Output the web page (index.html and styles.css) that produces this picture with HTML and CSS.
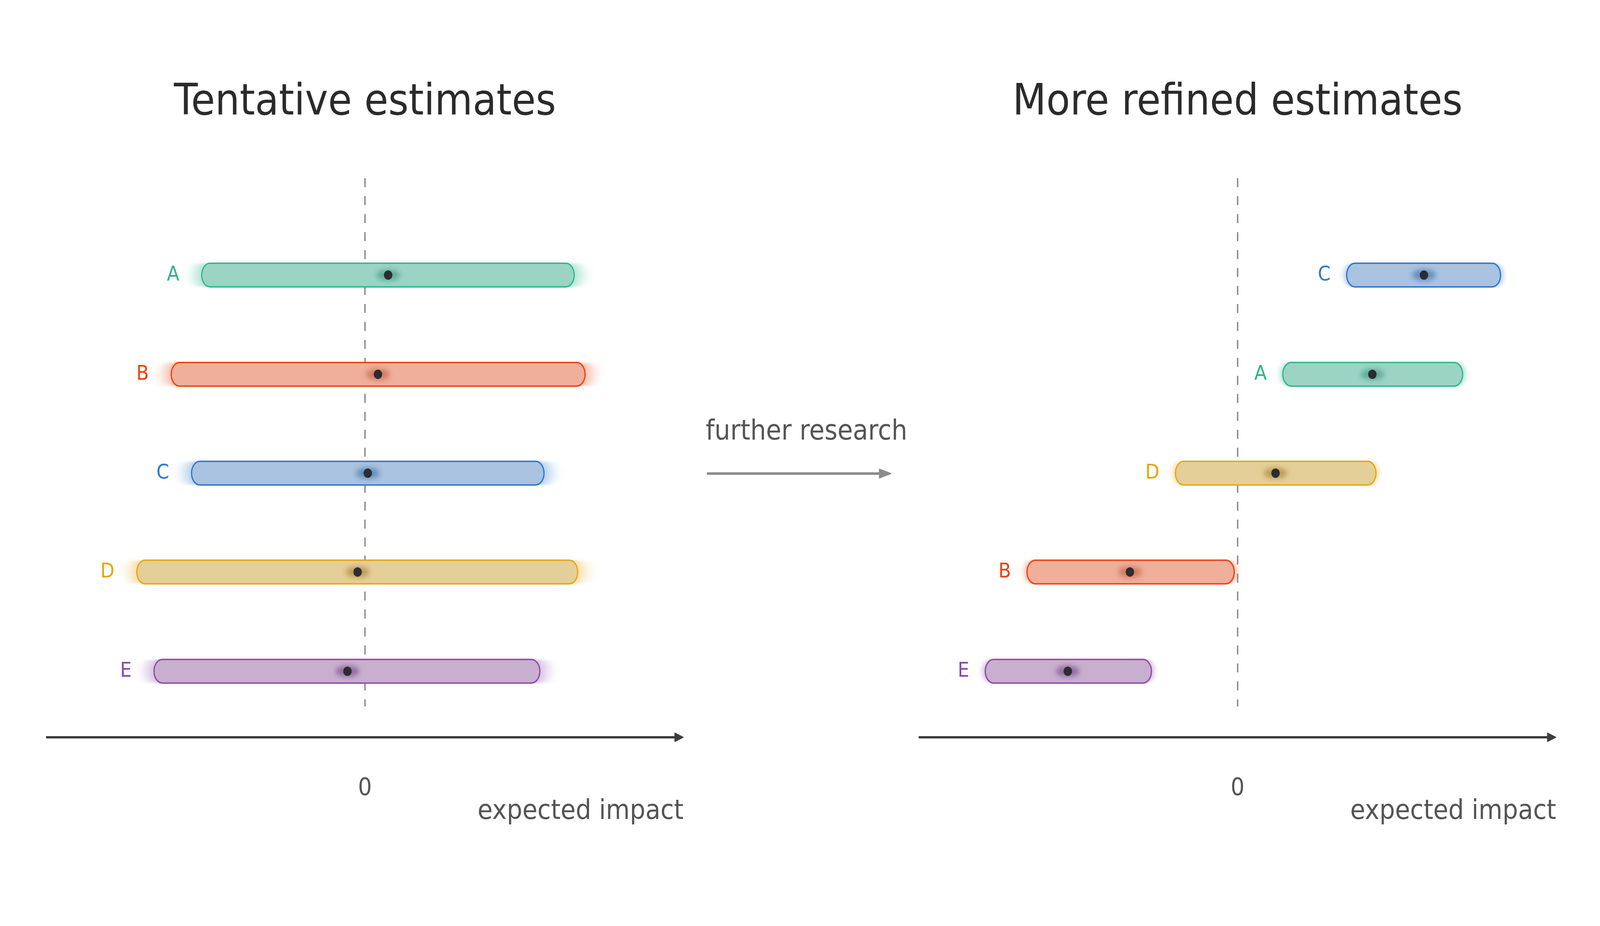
FILE: index.html
```html
<!DOCTYPE html>
<html lang="en">
<head>
<meta charset="utf-8">
<title>Tentative vs refined estimates</title>
<link rel="stylesheet" href="styles.css">
</head>
<body>
<div class="figure">
  <section class="panel">
    <h2 class="panel-title">Tentative estimates</h2>
    <svg class="chart" viewBox="100 320 1880 2050" preserveAspectRatio="none">
      <defs>
        <filter id="glowL" x="-20%" y="-50%" width="140%" height="200%"><feGaussianBlur stdDeviation="22 2"/></filter>
        <filter id="haloL" x="-60%" y="-150%" width="220%" height="400%"><feGaussianBlur stdDeviation="7"/></filter>
      </defs>
      <line class="zero" x1="1040" y1="456" x2="1040" y2="1808"/>

      <g class="series s-a">
        <rect class="glow wide" x="559.75" y="673.75" width="1091.5" height="60.5" rx="24" ry="30"/>
        <rect class="bar" x="574.75" y="673.75" width="1061.5" height="60.5" rx="24" ry="30"/>
        <ellipse class="halo" cx="1106" cy="704" rx="34" ry="14"/>
        <circle class="dot" cx="1106" cy="704" r="12"/>
        <text class="cat-label" x="511" y="718">A</text>
      </g>
      <g class="series s-b">
        <rect class="glow wide" x="472.75" y="927.75" width="1209.5" height="60.5" rx="24" ry="30"/>
        <rect class="bar" x="487.75" y="927.75" width="1179.5" height="60.5" rx="24" ry="30"/>
        <ellipse class="halo" cx="1077" cy="958" rx="34" ry="14"/>
        <circle class="dot" cx="1077" cy="958" r="12"/>
        <text class="cat-label" x="424" y="972">B</text>
      </g>
      <g class="series s-c">
        <rect class="glow wide" x="530.75" y="1180.75" width="1034.5" height="60.5" rx="24" ry="30"/>
        <rect class="bar" x="545.75" y="1180.75" width="1004.5" height="60.5" rx="24" ry="30"/>
        <ellipse class="halo" cx="1048" cy="1211" rx="34" ry="14"/>
        <circle class="dot" cx="1048" cy="1211" r="12"/>
        <text class="cat-label" x="482" y="1225">C</text>
      </g>
      <g class="series s-d">
        <rect class="glow wide" x="374.75" y="1433.75" width="1286.5" height="60.5" rx="24" ry="30"/>
        <rect class="bar" x="389.75" y="1433.75" width="1256.5" height="60.5" rx="24" ry="30"/>
        <ellipse class="halo" cx="1019" cy="1464" rx="34" ry="14"/>
        <circle class="dot" cx="1019" cy="1464" r="12"/>
        <text class="cat-label" x="326" y="1478">D</text>
      </g>
      <g class="series s-e">
        <rect class="glow wide" x="423.75" y="1687.75" width="1129.5" height="60.5" rx="24" ry="30"/>
        <rect class="bar" x="438.75" y="1687.75" width="1099.5" height="60.5" rx="24" ry="30"/>
        <ellipse class="halo" cx="990" cy="1718" rx="34" ry="14"/>
        <circle class="dot" cx="990" cy="1718" r="12"/>
        <text class="cat-label" x="375" y="1732">E</text>
      </g>

      <line class="axis" x1="131" y1="1887" x2="1930" y2="1887"/>
      <path class="axis-head" d="M1923 1876 L1947 1887 L1923 1898 Z"/>
      <text class="tick" x="1040" y="2035">0</text>
      <text class="axis-label" x="1948" y="2096">expected impact</text>
    </svg>
  </section>

  <div class="transition">
    <div class="transition-label">further research</div>
    <svg class="transition-arrow" viewBox="0 0 607 40" preserveAspectRatio="none">
      <line class="transition-line" x1="37" y1="20" x2="532" y2="20"/>
      <path class="transition-head" d="M526 9 L558 20 L526 31 Z"/>
    </svg>
  </div>

  <section class="panel">
    <h2 class="panel-title">More refined estimates</h2>
    <svg class="chart" viewBox="2587 320 1880 2050" preserveAspectRatio="none">
      <defs>
        <filter id="glowR" x="-20%" y="-50%" width="140%" height="200%"><feGaussianBlur stdDeviation="9 2"/></filter>
      </defs>
      <line class="zero" x1="3527" y1="456" x2="3527" y2="1808"/>

      <g class="series s-c">
        <rect class="glow narrow" x="3831.75" y="673.75" width="450.5" height="60.5" rx="24" ry="30"/>
        <rect class="bar" x="3837.75" y="673.75" width="438.5" height="60.5" rx="24" ry="30"/>
        <ellipse class="halo" cx="4058" cy="704" rx="34" ry="14"/>
        <circle class="dot" cx="4058" cy="704" r="12"/>
        <text class="cat-label" x="3792" y="718">C</text>
      </g>
      <g class="series s-a">
        <rect class="glow narrow" x="3649.75" y="927.75" width="524.5" height="60.5" rx="24" ry="30"/>
        <rect class="bar" x="3655.75" y="927.75" width="512.5" height="60.5" rx="24" ry="30"/>
        <ellipse class="halo" cx="3911" cy="958" rx="34" ry="14"/>
        <circle class="dot" cx="3911" cy="958" r="12"/>
        <text class="cat-label" x="3610" y="972">A</text>
      </g>
      <g class="series s-d">
        <rect class="glow narrow" x="3343.75" y="1180.75" width="583.5" height="60.5" rx="24" ry="30"/>
        <rect class="bar" x="3349.75" y="1180.75" width="571.5" height="60.5" rx="24" ry="30"/>
        <ellipse class="halo" cx="3635" cy="1211" rx="34" ry="14"/>
        <circle class="dot" cx="3635" cy="1211" r="12"/>
        <text class="cat-label" x="3304" y="1225">D</text>
      </g>
      <g class="series s-b">
        <rect class="glow narrow" x="2920.75" y="1433.75" width="602.5" height="60.5" rx="24" ry="30"/>
        <rect class="bar" x="2926.75" y="1433.75" width="590.5" height="60.5" rx="24" ry="30"/>
        <ellipse class="halo" cx="3220" cy="1464" rx="34" ry="14"/>
        <circle class="dot" cx="3220" cy="1464" r="12"/>
        <text class="cat-label" x="2881" y="1478">B</text>
      </g>
      <g class="series s-e">
        <rect class="glow narrow" x="2801.75" y="1687.75" width="485.5" height="60.5" rx="24" ry="30"/>
        <rect class="bar" x="2807.75" y="1687.75" width="473.5" height="60.5" rx="24" ry="30"/>
        <ellipse class="halo" cx="3043" cy="1718" rx="34" ry="14"/>
        <circle class="dot" cx="3043" cy="1718" r="12"/>
        <text class="cat-label" x="2762" y="1732">E</text>
      </g>

      <line class="axis" x1="2618" y1="1887" x2="4417" y2="1887"/>
      <path class="axis-head" d="M4410 1876 L4434 1887 L4410 1898 Z"/>
      <text class="tick" x="3527" y="2035">0</text>
      <text class="axis-label" x="4435" y="2096">expected impact</text>
    </svg>
  </section>
</div>
</body>
</html>
```

FILE: styles.css
```css
/* The figure is drawn on a 4560 x 2370 reference grid; horizontal
   measures are expressed as fractions of the viewport width
   (1 reference px = 100vw / 4560). */

html, body {
  margin: 0;
  padding: 0;
  background: #ffffff;
}

body {
  width: 100vw;
  height: 2370px;
  overflow: hidden;
  font-family: "DejaVu Sans", "Noto Sans", sans-serif;
}

.figure {
  display: grid;
  grid-template-columns: 41.2281vw 13.3114vw 41.2281vw;
  padding-left: 2.193vw;
  height: 2370px;
}

.panel {
  display: flex;
  flex-direction: column;
  padding-top: 190px;
  min-width: 0;
}

.panel-title {
  margin: 0;
  font-size: 111px;
  font-weight: normal;
  line-height: 130px;
  color: #2b2b2b;
  text-align: center;
  white-space: nowrap;
  transform: scaleX(0.8982);
}

.chart {
  display: block;
  width: 100%;
  height: 2050px;
  overflow: visible;
}

.zero {
  stroke: #8a8a8a;
  stroke-width: 4;
  stroke-dasharray: 23 23;
}

.axis {
  stroke: #3d3d3d;
  stroke-width: 6;
}

.axis-head {
  fill: #3d3d3d;
  stroke: #3d3d3d;
  stroke-width: 2;
  stroke-linejoin: round;
}

.tick {
  font-size: 62px;
  fill: #555555;
  text-anchor: middle;
}

.axis-label {
  font-size: 70px;
  fill: #555555;
  text-anchor: end;
}

.cat-label {
  font-size: 52px;
  text-anchor: end;
}

.bar {
  stroke-width: 3.5;
}

.glow {
  stroke: none;
  opacity: 0.6;
}

.glow.wide { filter: url(#glowL); }
.glow.narrow { filter: url(#glowR); }

.halo {
  filter: url(#haloL);
  opacity: 0.9;
}

.dot {
  fill: #2b2d33;
}

/* series colours */
.s-a .bar { fill: #9cd4c4; stroke: #2db88b; }
.s-a .glow { fill: #5cc6a4; }
.s-a .halo { fill: #5aa892; }
.s-a .cat-label { fill: #2bb38b; }

.s-b .bar { fill: #efaf9b; stroke: #f0410c; }
.s-b .glow { fill: #f27a56; }
.s-b .halo { fill: #cd745c; }
.s-b .cat-label { fill: #f0410c; }

.s-c .bar { fill: #a9c3e0; stroke: #2a78cf; }
.s-c .glow { fill: #6a9fdb; }
.s-c .halo { fill: #5a87b8; }
.s-c .cat-label { fill: #2a78cf; }

.s-d .bar { fill: #e5cf98; stroke: #e9a50e; }
.s-d .glow { fill: #ecbd52; }
.s-d .halo { fill: #b8954c; }
.s-d .cat-label { fill: #e8a30c; }

.s-e .bar { fill: #c8afd0; stroke: #8e4aab; }
.s-e .glow { fill: #a77bbd; }
.s-e .halo { fill: #8a6499; }
.s-e .cat-label { fill: #8e44ad; }

.transition {
  display: flex;
  flex-direction: column;
  align-items: stretch;
  padding-top: 1060px;
  min-width: 0;
}

.transition-label {
  font-size: 71px;
  line-height: 82px;
  color: #555555;
  text-align: center;
  white-space: nowrap;
  transform: scaleX(0.8982);
  margin-right: 0.1vw;
}

.transition-arrow {
  display: block;
  width: 100%;
  height: 40px;
  margin-top: 50px;
}

.transition-line {
  stroke: #8c8c8c;
  stroke-width: 6.5;
  stroke-linecap: round;
}

.transition-head {
  fill: #8c8c8c;
  stroke: #8c8c8c;
  stroke-width: 3;
  stroke-linejoin: round;
}
```
